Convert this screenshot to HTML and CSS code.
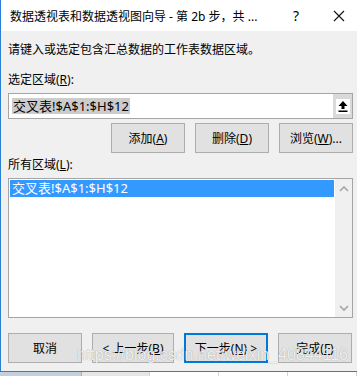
FILE: index.html
```html
<!DOCTYPE html>
<html lang="zh-CN">
<head>
  <meta charset="UTF-8" />
  <title>数据透视表和数据透视图向导</title>
  <link rel="stylesheet" href="styles.css">
</head>
<body>
  <div class="window">
    <div class="titlebar">
      <span class="title">数据透视表和数据透视图向导 - 第 2b 步，共 ...</span>
      <span class="help">?</span>
      <span class="close">
        <svg width="12" height="12" viewBox="0 0 12 12"><path d="M1 1 L11 11 M11 1 L1 11" stroke="#111" stroke-width="1.1" fill="none"/></svg>
      </span>
    </div>
    <div class="content">
      <p class="prompt">请键入或选定包含汇总数据的工作表数据区域。</p>
      <p class="label">选定区域(<u>R</u>):</p>
      <div class="range-input">
        <span class="range-text"><span class="selected-text">交叉表!$A$1:$H$12</span></span>
        <span class="collapse-btn">
          <span class="collapse-face">
            <svg width="10" height="11" viewBox="0 0 10 11"><path d="M5 0 L9.5 5 L6.5 5 L6.5 8 L3.5 8 L3.5 5 L0.5 5 Z" fill="#000"/><rect x="0.5" y="9.5" width="9" height="1.5" fill="#000"/></svg>
          </span>
        </span>
      </div>
      <div class="range-actions">
        <button class="btn">添加(<u>A</u>)</button>
        <button class="btn">删除(<u>D</u>)</button>
        <button class="btn">浏览(<u>W</u>)...</button>
      </div>
      <p class="label label-list">所有区域(<u>L</u>):</p>
      <div class="range-list">
        <div class="list-items">
          <div class="list-item active">交叉表!$A$1:$H$12</div>
        </div>
        <div class="scrollbar">
          <svg width="10" height="7" viewBox="0 0 10 7"><path d="M1 6 L5 2 L9 6" stroke="#a6a6a6" stroke-width="1.6" fill="none"/></svg>
          <svg width="10" height="7" viewBox="0 0 10 7"><path d="M1 1 L5 5 L9 1" stroke="#a6a6a6" stroke-width="1.6" fill="none"/></svg>
        </div>
      </div>
      <div class="footer">
        <button class="btn btn-cancel">取消</button>
        <button class="btn btn-back">&lt; 上一步(<u>B</u>)</button>
        <button class="btn btn-next">下一步(<u>N</u>) &gt;</button>
        <button class="btn">完成(<u>F</u>)</button>
      </div>
    </div>
    <div class="watermark">https://blog.csdn.net/weixin_40844116</div>
  </div>
  <div class="sheet">
    <div class="cell cell-head"></div>
    <div class="cell cell-light"></div>
    <div class="cell"></div>
    <div class="cell"></div>
    <div class="cell"></div>
  </div>
</body>
</html>
```

FILE: styles.css
```css
* { margin: 0; padding: 0; box-sizing: border-box; }
body {
  font-family: "Noto Sans", "Noto Sans CJK SC", sans-serif;
  font-size: 12px;
  color: #000;
  width: 357px;
  height: 376px;
  overflow: hidden;
  background: #fff;
}
.window {
  position: relative;
  height: 372px;
  border-left: 1px solid #2b7fd4;
  border-bottom: 1px solid #2b7fd4;
  display: flex;
  flex-direction: column;
  background: #f0f0f0;
  overflow: hidden;
}
/* Title bar */
.titlebar {
  height: 31px;
  background: #fff;
  display: flex;
  align-items: center;
  padding-left: 9px;
}
.title {
  font-size: 12px;
  white-space: nowrap;
  width: 276px;
}
.help {
  font-size: 14px;
  width: 20px;
  text-align: center;
}
.close {
  margin-left: 27px;
  display: flex;
}
/* Body */
.content {
  flex: 1;
  padding: 11px 4px 0 7px;
  display: flex;
  flex-direction: column;
}
.prompt, .label {
  line-height: 16px;
  white-space: nowrap;
}
.label { margin-top: 14px; }
.label-list { margin-top: 4px; }
.range-input {
  margin-top: 5px;
  height: 26px;
  border: 1px solid #a5a5a5;
  background: #fff;
  display: flex;
}
.range-text {
  flex: 1;
  display: flex;
  align-items: center;
  padding-left: 3px;
}
.selected-text {
  background: #cccccc;
  font-size: 13px;
  line-height: 16px;
  padding: 0 1px;
}
.collapse-btn {
  width: 19px;
  background: #d9d9d9;
  display: flex;
  align-items: center;
  justify-content: center;
}
.collapse-face {
  width: 14px;
  height: 15px;
  background: #fff;
  display: flex;
  align-items: center;
  justify-content: center;
}
.range-actions {
  margin-top: 4px;
  display: flex;
  justify-content: flex-end;
  gap: 10px;
}
.btn {
  font-family: inherit;
  font-size: 12px;
  width: 74px;
  height: 30px;
  background: #e1e1e1;
  border: 1px solid #adadad;
  color: #000;
  white-space: nowrap;
}
.range-list {
  margin-top: 5px;
  height: 140px;
  border: 1px solid #a5a5a5;
  background: #fff;
  display: flex;
}
.list-items {
  flex: 1;
  padding: 1px 1px 0 1px;
}
.list-item {
  font-size: 13px;
  line-height: 17px;
  padding-left: 2px;
}
.list-item.active {
  background: #3399ff;
  color: #fff;
}
.scrollbar {
  width: 17px;
  background: #f0f0f0;
  display: flex;
  flex-direction: column;
  justify-content: space-between;
  align-items: center;
  padding: 6px 0 5px;
}
.footer {
  margin-top: 15px;
  display: flex;
  gap: 10px;
}
.btn-back { width: 82px; }
.btn-next {
  width: 84px;
  border: 2px solid #0078d7;
}
.watermark {
  position: absolute;
  left: 76px;
  top: 346px;
  width: 274px;
  font-family: "Liberation Sans", sans-serif;
  font-size: 16px;
  line-height: 18px;
  color: rgba(255, 255, 255, 0.85);
  text-shadow: 0 0 1px rgba(90, 90, 90, 0.6);
  white-space: nowrap;
  overflow: hidden;
  pointer-events: none;
}
/* Sheet strip below the dialog */
.sheet {
  height: 4px;
  display: flex;
}
.cell {
  width: 72px;
  border-right: 1px solid #d4d4d4;
}
.cell-head { width: 86px; background: #c3cfdc; border-right: 1px solid #9eb6ce; }
.cell-light { width: 71px; background: #e6e6e6; }
```
